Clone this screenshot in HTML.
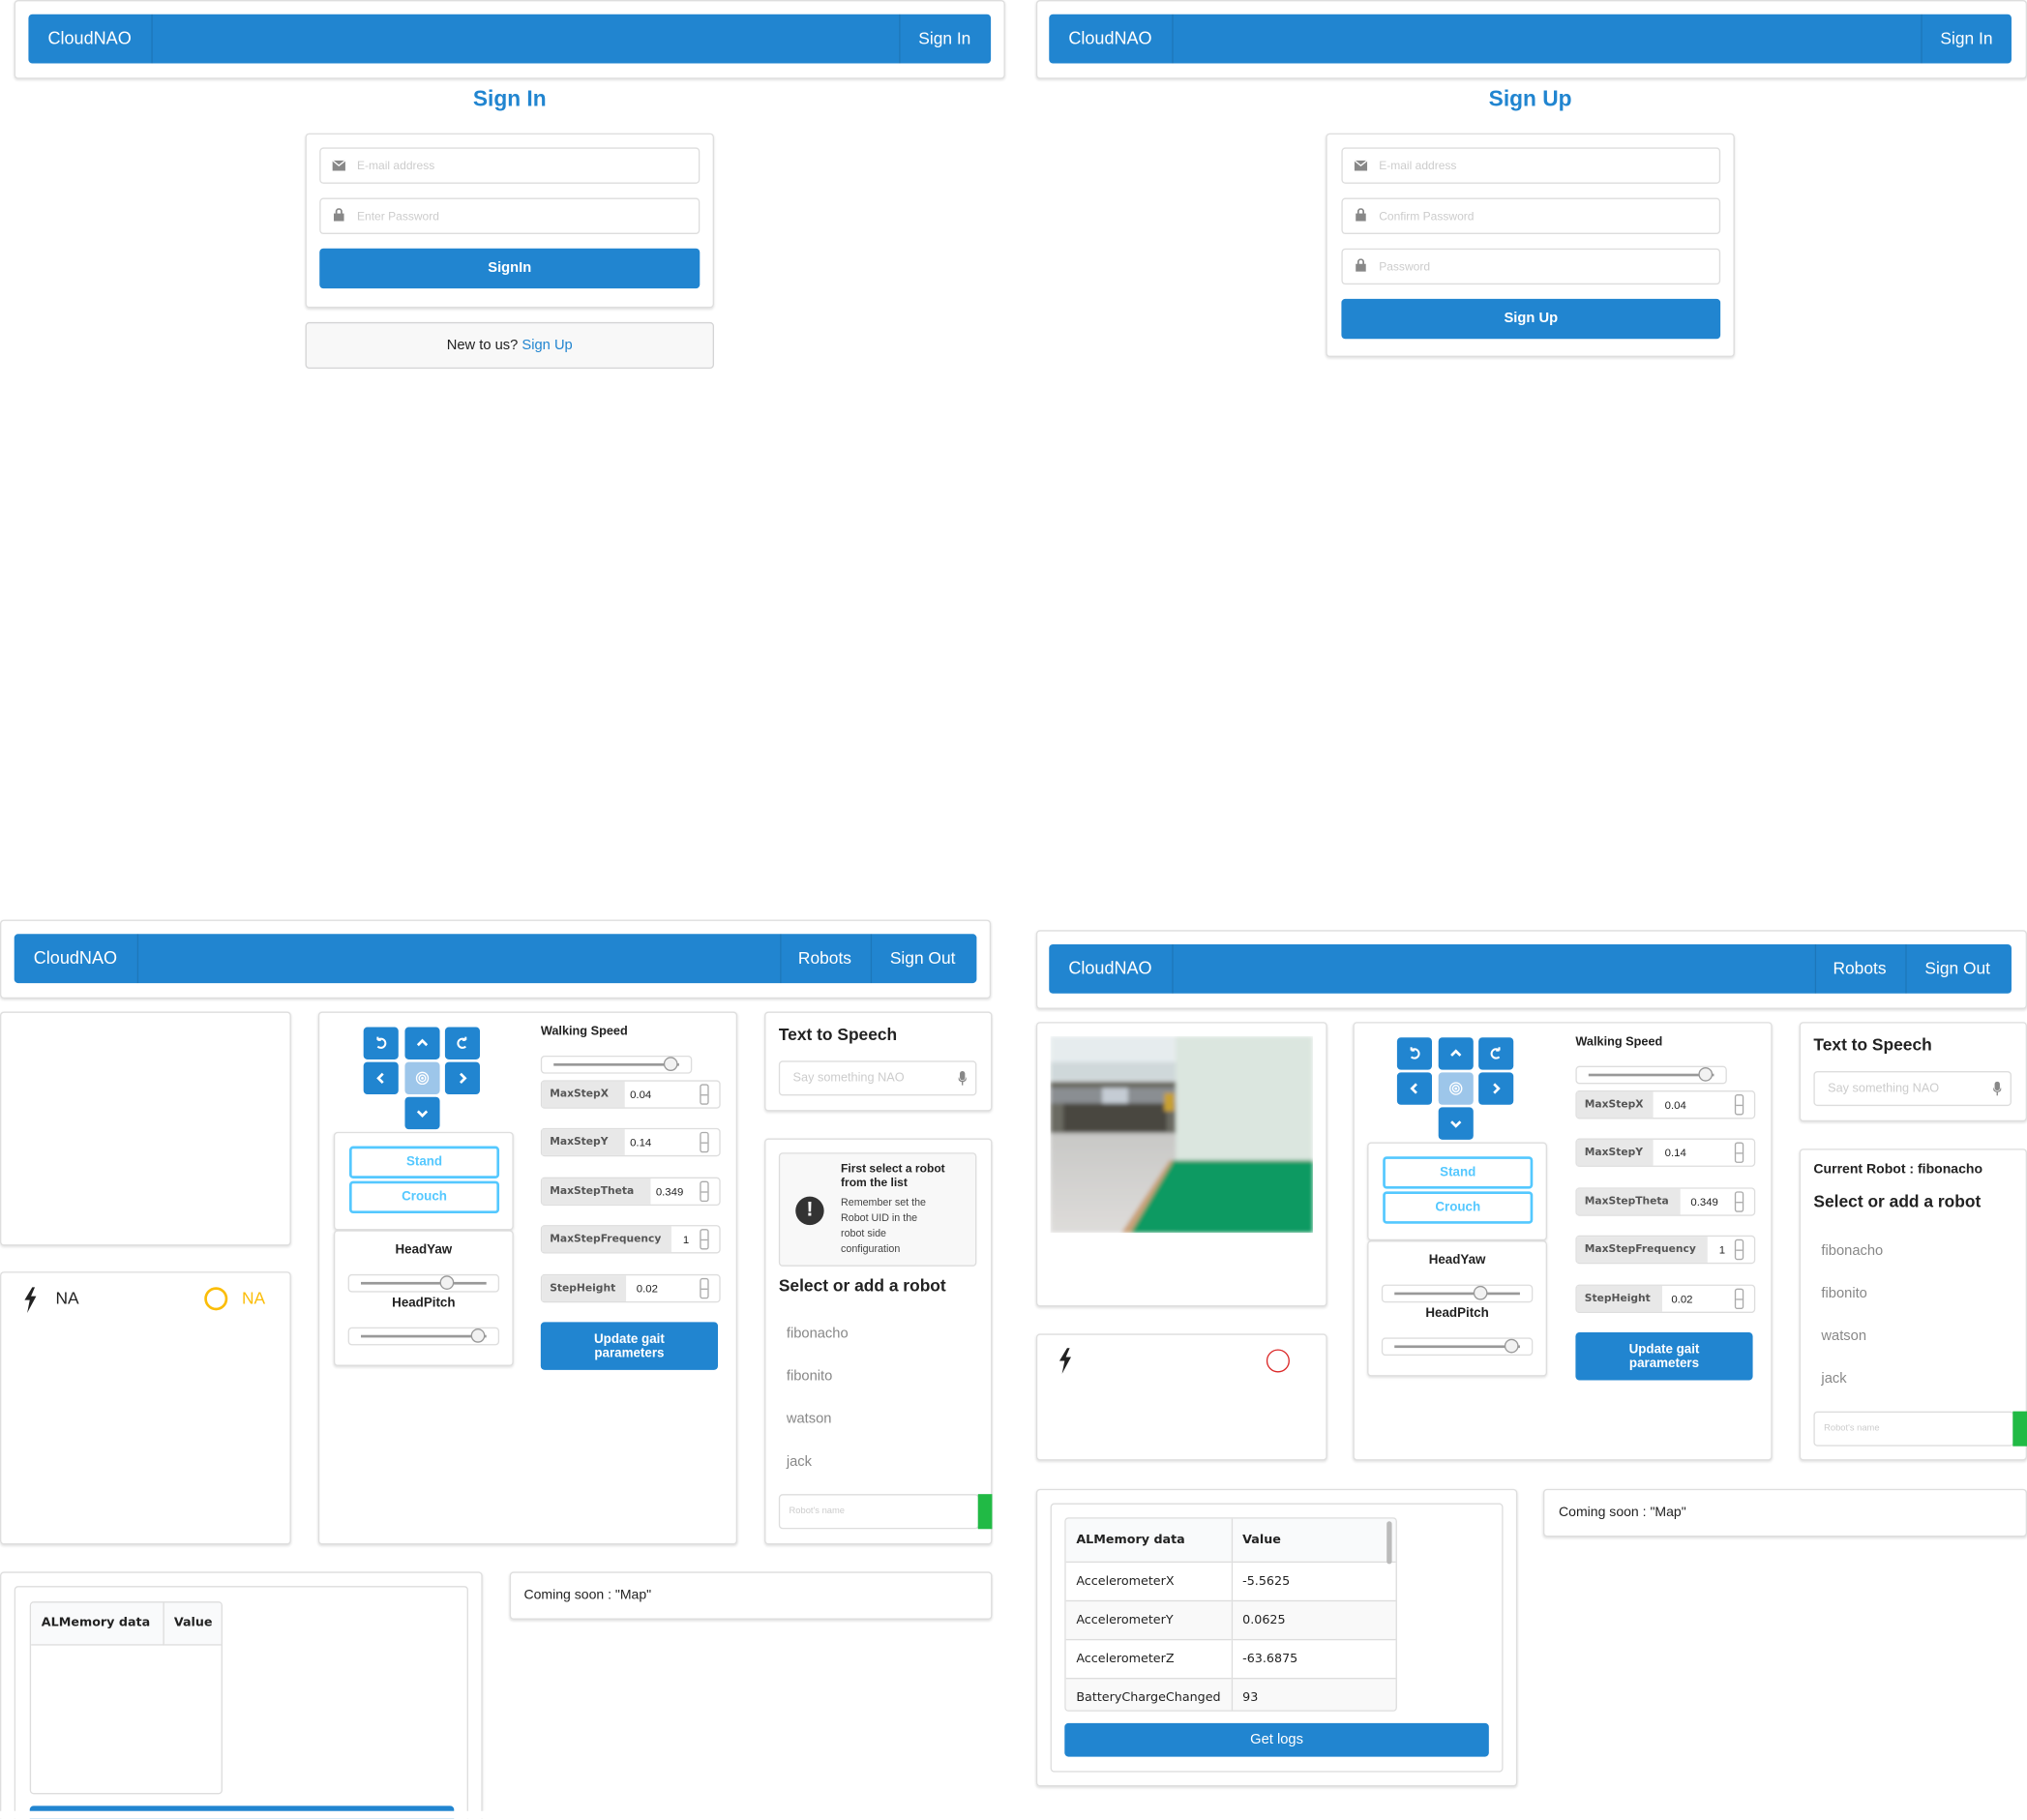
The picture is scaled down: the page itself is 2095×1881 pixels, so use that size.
<!DOCTYPE html>
<html><head><meta charset="utf-8">
<style>
*{box-sizing:border-box;margin:0;padding:0}
html,body{width:2095px;height:1881px;overflow:hidden;background:#fff}
#st{position:absolute;left:0;top:0;width:1567px;height:1406px;overflow:hidden;transform:scale(1.33695);transform-origin:0 0;font-family:"Liberation Sans",sans-serif;color:#222}
.a{position:absolute}
.card{position:absolute;background:#fff;border:1px solid #dedede;border-radius:3px;box-shadow:0 1px 2px rgba(0,0,0,.12)}
.nav{position:absolute;background:#2185d0;border-radius:3px;color:#fff;font-size:13px}
.nav .t{position:absolute;top:0;line-height:38px}
.nav .d{position:absolute;top:0;width:1px;height:100%;background:rgba(0,0,0,.1)}
.inp{position:absolute;border:1px solid #ddd;border-radius:3px;background:#fff;font-size:9px;color:#ccc;padding-left:28px;line-height:26px}
.btn{position:absolute;background:#2185d0;color:#fff;border-radius:3px;text-align:center;font-weight:bold;font-size:11px}
.db{position:absolute;width:27px;height:25px;background:#2185d0;border-radius:3px}
.db svg{position:absolute;left:8px;top:7px}
.ob{position:absolute;left:11px;width:116px;height:25px;border:2px solid #54c8ff;border-radius:3px;color:#54c8ff;font-size:10px;text-align:center;line-height:21px;font-weight:bold}
.sl{position:absolute;border:1px solid #ddd;border-radius:3px;height:14px;background:#fff}
.sl i{position:absolute;left:9px;right:9px;top:5px;height:2px;background:#999}
.sl b{position:absolute;top:0px;width:11px;height:11px;border:1px solid #999;border-radius:50%;background:#f2f2f2}
.ni{position:absolute;left:172px;width:139px;height:22px;border:1px solid #ddd;border-radius:3px;background:#fff}
.ni .l{position:absolute;left:0;top:0;bottom:0;background:#e8e8e8;font-family:"DejaVu Sans",sans-serif;font-weight:bold;font-size:8px;color:#555;line-height:20px;padding-left:6px}
.ni .v{position:absolute;top:0;font-size:8.5px;line-height:20px;color:#222}
.ni .s{position:absolute;right:8px;top:2px;width:7px;height:16px;border:1px solid #aaa;border-radius:2px}
.ni .s:after{content:"";position:absolute;left:0;right:0;top:7px;height:1px;background:#aaa}
.li{position:absolute;left:16px;font-size:11px;color:#888}
.h{font-size:13px;font-weight:bold}
table{border-collapse:collapse;font-family:"DejaVu Sans",sans-serif;font-size:9.5px}
</style></head><body><div id="st">

<div class="card" style="left:11px;top:0;width:766px;height:61px"></div>
<div class="nav" style="left:22px;top:11px;width:744px;height:38px">
 <span class="t" style="left:15px;font-size:13.5px">CloudNAO</span><span class="d" style="left:95px"></span>
 <span class="d" style="left:673px"></span><span class="t" style="left:688px">Sign In</span></div>
<div class="a" style="left:236px;top:67px;width:316px;text-align:center;color:#2185d0;font-weight:bold;font-size:17px">Sign In</div>
<div class="card" style="left:236px;top:103px;width:316px;height:135px"></div>
<div class="inp" style="left:247px;top:114px;width:294px;height:28px">E-mail address</div>
<div class="inp" style="left:247px;top:153px;width:294px;height:28px">Enter Password</div>
<div class="btn" style="left:247px;top:192px;width:294px;height:31px;line-height:31px">SignIn</div>
<div class="a" style="left:236px;top:249px;width:316px;height:36px;background:#f8f8f8;border:1px solid #d4d4d5;border-radius:3px;text-align:center;font-size:11px;line-height:34px">New to us? <span style="color:#2185d0">Sign Up</span></div>

<div class="card" style="left:801px;top:0;width:766px;height:61px"></div>
<div class="nav" style="left:811px;top:11px;width:744px;height:38px">
 <span class="t" style="left:15px;font-size:13.5px">CloudNAO</span><span class="d" style="left:95px"></span>
 <span class="d" style="left:674px"></span><span class="t" style="left:689px">Sign In</span></div>
<div class="a" style="left:1025px;top:67px;width:316px;text-align:center;color:#2185d0;font-weight:bold;font-size:17px">Sign Up</div>
<div class="card" style="left:1025px;top:103px;width:316px;height:173px"></div>
<div class="inp" style="left:1037px;top:114px;width:293px;height:28px">E-mail address</div>
<div class="inp" style="left:1037px;top:153px;width:293px;height:28px">Confirm Password</div>
<div class="inp" style="left:1037px;top:192px;width:293px;height:28px">Password</div>
<div class="btn" style="left:1037px;top:231px;width:293px;height:31px;line-height:31px">Sign Up</div>

<svg class="a" style="left:257px;top:124px" width="10" height="8"><rect width="10" height="8" fill="#888"/><path d="M0 0L5 4L10 0" stroke="#fff" fill="none"/></svg>
<svg class="a" style="left:258px;top:161px" width="8" height="10"><rect y="4" width="8" height="6" fill="#888"/><path d="M2 5V2.5a2 2 0 0 1 4 0V5" stroke="#888" fill="none" stroke-width="1.3"/></svg>
<svg class="a" style="left:1047px;top:124px" width="10" height="8"><rect width="10" height="8" fill="#888"/><path d="M0 0L5 4L10 0" stroke="#fff" fill="none"/></svg>
<svg class="a" style="left:1048px;top:161px" width="8" height="10"><rect y="4" width="8" height="6" fill="#888"/><path d="M2 5V2.5a2 2 0 0 1 4 0V5" stroke="#888" fill="none" stroke-width="1.3"/></svg>
<svg class="a" style="left:1048px;top:200px" width="8" height="10"><rect y="4" width="8" height="6" fill="#888"/><path d="M2 5V2.5a2 2 0 0 1 4 0V5" stroke="#888" fill="none" stroke-width="1.3"/></svg>

<div class="card" style="left:0;top:711px;width:766px;height:61px"></div>
<div class="nav" style="left:11px;top:722px;width:744px;height:38px">
 <span class="t" style="left:15px;font-size:13.5px">CloudNAO</span><span class="d" style="left:95px"></span>
 <span class="d" style="left:592px"></span><span class="t" style="left:606px">Robots</span>
 <span class="d" style="left:662px"></span><span class="t" style="left:677px">Sign Out</span></div>
<div class="card" style="left:0;top:782px;width:225px;height:181px"></div>
<div class="card" style="left:0;top:983px;width:225px;height:211px">
 <svg class="a" style="left:17px;top:11px" width="11" height="20"><path d="M7 0L1 10H5L3 20L10 7H6L9 0Z" fill="#222"/></svg>
 <span class="a" style="left:42px;top:12px;font-size:13px">NA</span>
 <div class="a" style="left:157px;top:11px;width:18px;height:18px;border:2px solid #fbbd08;border-radius:50%"></div>
 <span class="a" style="left:186px;top:12px;font-size:13px;color:#fbbd08">NA</span>
</div>

<div class="card" style="left:246px;top:782px;width:324px;height:412px"></div>
<div class="card" style="left:591px;top:782px;width:176px;height:77px">
 <div class="a h" style="left:10px;top:9px">Text to Speech</div>
 <div class="a" style="left:10px;top:37px;width:153px;height:27px;border:1px solid #ddd;border-radius:3px;font-size:9.5px;color:#ccc;line-height:25px;padding-left:10px">Say something NAO
  <svg class="a" style="right:7px;top:7px" width="6" height="11"><rect x="1" width="4" height="7" rx="2" fill="#888"/><path d="M0 5a3 3 0 0 0 6 0M3 8v3" stroke="#888" fill="none"/></svg></div>
</div>
<div class="card" style="left:591px;top:880px;width:176px;height:314px">
 <div class="a" style="left:10px;top:10px;width:153px;height:88px;background:#f8f8f8;border:1px solid #ddd;border-radius:3px">
  <div class="a" style="left:12px;top:33px;width:22px;height:22px;border-radius:50%;background:#333;color:#fff;text-align:center;font-weight:bold;font-size:16px;line-height:22px">!</div>
  <div class="a" style="left:47px;top:6px;font-size:9px;font-weight:bold;line-height:11px">First select a robot<br>from the list</div>
  <div class="a" style="left:47px;top:32px;font-size:8px;line-height:12px;color:#444">Remember set the<br>Robot UID in the<br>robot side<br>configuration</div>
 </div>
 <div class="a h" style="left:10px;top:105px">Select or add a robot</div>
 <div class="li" style="top:144px">fibonacho</div><div class="li" style="top:177px">fibonito</div>
 <div class="li" style="top:210px">watson</div><div class="li" style="top:243px">jack</div>
 <div class="a" style="left:10px;top:274px;width:155px;height:27px;border:1px solid #ddd;border-radius:3px;font-size:7px;color:#ccc;line-height:25px;padding-left:7px">Robot's name</div>
 <div class="a" style="left:164px;top:274px;width:11px;height:27px;background:#21ba45"></div>
</div>
<div class="card" style="left:0;top:1215px;width:373px;height:200px">
 <div class="a" style="left:10px;top:10px;width:351px;height:200px;border:1px solid #ddd;border-radius:3px"></div>
 <div class="a" style="left:22px;top:22px;width:149px;height:149px;border:1px solid #ddd;border-radius:3px;overflow:hidden">
  <table style="width:100%"><tr style="background:#f9fafb;height:32px"><th style="text-align:left;padding-left:8px;border-right:1px solid #ddd;border-bottom:1px solid #ddd;width:102px">ALMemory data</th><th style="text-align:left;padding-left:8px;border-bottom:1px solid #ddd">Value</th></tr></table>
 </div>
 <div class="a" style="left:22px;top:180px;width:328px;height:20px;background:#2185d0;border-radius:3px"></div>
</div>
<div class="card" style="left:394px;top:1215px;width:373px;height:37px;font-size:10.5px;line-height:35px;padding-left:10px">Coming soon : "Map"</div>

<div class="card" style="left:801px;top:719px;width:766px;height:61px"></div>
<div class="nav" style="left:811px;top:730px;width:744px;height:38px">
 <span class="t" style="left:15px;font-size:13.5px">CloudNAO</span><span class="d" style="left:95px"></span>
 <span class="d" style="left:592px"></span><span class="t" style="left:606px">Robots</span>
 <span class="d" style="left:662px"></span><span class="t" style="left:677px">Sign Out</span></div>
<div class="card" style="left:801px;top:790px;width:225px;height:220px">
 <svg class="a" style="left:10px;top:10px" width="203" height="152" viewBox="0 0 203 152">
  <defs><filter id="bl"><feGaussianBlur stdDeviation="1.5"/></filter>
  <linearGradient id="fl" x1="0" y1="0" x2="0" y2="1"><stop offset="0" stop-color="#c8c8c6"/><stop offset="1" stop-color="#dedcda"/></linearGradient></defs>
  <g filter="url(#bl)">
  <rect width="203" height="152" fill="#d8dcda"/>
  <rect width="97" height="35" fill="#e6ecee"/>
  <rect x="0" y="20" width="97" height="14" fill="#cfd8da"/>
  <rect y="35" width="97" height="40" fill="#6b6a62"/>
  <rect x="0" y="40" width="97" height="12" fill="#8a8e92"/>
  <rect x="40" y="40" width="20" height="12" fill="#c5ccd4"/>
  <rect x="10" y="52" width="80" height="22" fill="#4a4741"/>
  <rect x="88" y="44" width="8" height="14" fill="#c8a030"/>
  <rect y="75" width="97" height="77" fill="url(#fl)"/>
  <rect x="97" width="106" height="96" fill="#dbe6df"/>
  <path d="M95 96L203 96L203 152L62 152Z" fill="#119a62"/>
  <path d="M95 96L62 152L55 152L92 96Z" fill="#c9a178"/>
  </g>
 </svg>
</div>
<div class="card" style="left:801px;top:1031px;width:225px;height:98px">
 <svg class="a" style="left:16px;top:10px" width="11" height="20"><path d="M7 0L1 10H5L3 20L10 7H6L9 0Z" fill="#222"/></svg>
 <div class="a" style="left:177px;top:11px;width:18px;height:18px;border:1.5px solid #db2828;border-radius:50%"></div>
</div>
<div class="card" style="left:1046px;top:790px;width:324px;height:339px"></div>
<div class="card" style="left:1391px;top:790px;width:176px;height:77px">
 <div class="a h" style="left:10px;top:9px">Text to Speech</div>
 <div class="a" style="left:10px;top:37px;width:153px;height:27px;border:1px solid #ddd;border-radius:3px;font-size:9.5px;color:#ccc;line-height:25px;padding-left:10px">Say something NAO
  <svg class="a" style="right:7px;top:7px" width="6" height="11"><rect x="1" width="4" height="7" rx="2" fill="#888"/><path d="M0 5a3 3 0 0 0 6 0M3 8v3" stroke="#888" fill="none"/></svg></div>
</div>
<div class="card" style="left:1391px;top:888px;width:176px;height:241px">
 <div class="a" style="left:10px;top:9px;font-size:10.5px;font-weight:bold">Current Robot : fibonacho</div>
 <div class="a h" style="left:10px;top:32px">Select or add a robot</div>
 <div class="li" style="top:72px">fibonacho</div><div class="li" style="top:105px">fibonito</div>
 <div class="li" style="top:138px">watson</div><div class="li" style="top:171px">jack</div>
 <div class="a" style="left:10px;top:202px;width:155px;height:27px;border:1px solid #ddd;border-radius:3px;font-size:7px;color:#ccc;line-height:25px;padding-left:7px">Robot's name</div>
 <div class="a" style="left:164px;top:202px;width:11px;height:27px;background:#21ba45"></div>
</div>
<div class="card" style="left:801px;top:1151px;width:372px;height:230px">
 <div class="a" style="left:10px;top:10px;width:350px;height:208px;border:1px solid #ddd;border-radius:3px"></div>
 <div class="a" style="left:21px;top:21px;width:257px;height:150px;border:1px solid #ddd;border-radius:3px;overflow:hidden">
  <table style="width:100%">
   <tr style="background:#f9fafb;height:33px"><th style="text-align:left;padding-left:8px;border-right:1px solid #ddd;width:128px">ALMemory data</th><th style="text-align:left;padding-left:8px">Value</th></tr>
   <tr style="height:30px;border-top:1px solid #ddd"><td style="padding-left:8px;border-right:1px solid #ddd">AccelerometerX</td><td style="padding-left:8px">-5.5625</td></tr>
   <tr style="height:30px;border-top:1px solid #ddd;background:#f9f9f9"><td style="padding-left:8px;border-right:1px solid #ddd">AccelerometerY</td><td style="padding-left:8px">0.0625</td></tr>
   <tr style="height:30px;border-top:1px solid #ddd"><td style="padding-left:8px;border-right:1px solid #ddd">AccelerometerZ</td><td style="padding-left:8px">-63.6875</td></tr>
   <tr style="height:30px;border-top:1px solid #ddd;background:#f9f9f9"><td style="padding-left:8px;border-right:1px solid #ddd">BatteryChargeChanged</td><td style="padding-left:8px">93</td></tr>
  </table>
  <div class="a" style="right:3px;top:2px;width:4px;height:33px;background:#bbb;border-radius:2px"></div>
 </div>
 <div class="btn" style="left:21px;top:180px;width:328px;height:26px;line-height:26px;font-weight:normal">Get logs</div>
</div>
<div class="card" style="left:1193px;top:1151px;width:374px;height:37px;font-size:10.5px;line-height:35px;padding-left:11px">Coming soon : "Map"</div>

<div class="a" style="left:246px;top:782px;width:324px;height:300px">
 <div class="db" style="left:35px;top:12px"><svg width="11" height="11"><path d="M3 3A3.5 3.5 0 1 1 3 8M3 3V0.5M3 3H5.5" stroke="#fff" stroke-width="1.5" fill="none"/></svg></div>
 <div class="db" style="left:67px;top:12px"><svg width="11" height="11"><path d="M2 7L5.5 3.5L9 7" stroke="#fff" stroke-width="2" fill="none"/></svg></div>
 <div class="db" style="left:98px;top:12px"><svg width="11" height="11"><path d="M8 3A3.5 3.5 0 1 0 8 8M8 3V0.5M8 3H5.5" stroke="#fff" stroke-width="1.5" fill="none"/></svg></div>
 <div class="db" style="left:35px;top:39px"><svg width="11" height="11"><path d="M7 2L3.5 5.5L7 9" stroke="#fff" stroke-width="2" fill="none"/></svg></div>
 <div class="db" style="left:67px;top:39px;background:#9dc6ea"><svg width="11" height="11"><circle cx="5.5" cy="5.5" r="4.5" stroke="#fff" fill="none"/><circle cx="5.5" cy="5.5" r="2.5" stroke="#fff" fill="none"/><circle cx="5.5" cy="5.5" r="1" fill="#fff"/></svg></div>
 <div class="db" style="left:98px;top:39px"><svg width="11" height="11"><path d="M4 2L7.5 5.5L4 9" stroke="#fff" stroke-width="2" fill="none"/></svg></div>
 <div class="db" style="left:67px;top:66px"><svg width="11" height="11"><path d="M2 4L5.5 7.5L9 4" stroke="#fff" stroke-width="2" fill="none"/></svg></div>
 <div class="card" style="left:12px;top:93px;width:139px;height:76px"><div class="ob" style="top:10px">Stand</div><div class="ob" style="top:37px">Crouch</div></div>
 <div class="card" style="left:12px;top:169px;width:139px;height:105px">
  <div class="a" style="left:0;width:137px;top:9px;text-align:center;font-size:10px;font-weight:bold">HeadYaw</div>
  <div class="sl" style="left:10px;top:33px;width:117px"><i></i><b style="left:70px"></b></div>
  <div class="a" style="left:0;width:137px;top:50px;text-align:center;font-size:10px;font-weight:bold">HeadPitch</div>
  <div class="sl" style="left:10px;top:74px;width:117px"><i></i><b style="left:94px"></b></div>
 </div>
 <div class="a" style="left:172px;top:10px;font-size:9.5px;font-weight:bold">Walking Speed</div>
 <div class="sl" style="left:172px;top:34px;width:117px"><i></i><b style="left:94px"></b></div>
 <div class="ni" style="top:53px"><span class="l" style="width:64px">MaxStepX</span><span class="v" style="left:68px">0.04</span><span class="s"></span></div>
 <div class="ni" style="top:90px"><span class="l" style="width:64px">MaxStepY</span><span class="v" style="left:68px">0.14</span><span class="s"></span></div>
 <div class="ni" style="top:128px"><span class="l" style="width:84px">MaxStepTheta</span><span class="v" style="left:88px">0.349</span><span class="s"></span></div>
 <div class="ni" style="top:165px"><span class="l" style="width:100px">MaxStepFrequency</span><span class="v" style="left:109px">1</span><span class="s"></span></div>
 <div class="ni" style="top:203px"><span class="l" style="width:65px">StepHeight</span><span class="v" style="left:73px">0.02</span><span class="s"></span></div>
 <div class="btn" style="left:172px;top:240px;width:137px;height:37px;font-size:10px;line-height:11px;padding-top:8px">Update gait<br>parameters</div>
</div>

<div class="a" style="left:1046px;top:790px;width:324px;height:300px">
 <div class="db" style="left:34px;top:12px"><svg width="11" height="11"><path d="M3 3A3.5 3.5 0 1 1 3 8M3 3V0.5M3 3H5.5" stroke="#fff" stroke-width="1.5" fill="none"/></svg></div>
 <div class="db" style="left:66px;top:12px"><svg width="11" height="11"><path d="M2 7L5.5 3.5L9 7" stroke="#fff" stroke-width="2" fill="none"/></svg></div>
 <div class="db" style="left:97px;top:12px"><svg width="11" height="11"><path d="M8 3A3.5 3.5 0 1 0 8 8M8 3V0.5M8 3H5.5" stroke="#fff" stroke-width="1.5" fill="none"/></svg></div>
 <div class="db" style="left:34px;top:39px"><svg width="11" height="11"><path d="M7 2L3.5 5.5L7 9" stroke="#fff" stroke-width="2" fill="none"/></svg></div>
 <div class="db" style="left:66px;top:39px;background:#9dc6ea"><svg width="11" height="11"><circle cx="5.5" cy="5.5" r="4.5" stroke="#fff" fill="none"/><circle cx="5.5" cy="5.5" r="2.5" stroke="#fff" fill="none"/><circle cx="5.5" cy="5.5" r="1" fill="#fff"/></svg></div>
 <div class="db" style="left:97px;top:39px"><svg width="11" height="11"><path d="M4 2L7.5 5.5L4 9" stroke="#fff" stroke-width="2" fill="none"/></svg></div>
 <div class="db" style="left:66px;top:66px"><svg width="11" height="11"><path d="M2 4L5.5 7.5L9 4" stroke="#fff" stroke-width="2" fill="none"/></svg></div>
 <div class="card" style="left:11px;top:93px;width:139px;height:76px"><div class="ob" style="top:10px">Stand</div><div class="ob" style="top:37px">Crouch</div></div>
 <div class="card" style="left:11px;top:169px;width:139px;height:105px">
  <div class="a" style="left:0;width:137px;top:9px;text-align:center;font-size:10px;font-weight:bold">HeadYaw</div>
  <div class="sl" style="left:10px;top:33px;width:117px"><i></i><b style="left:70px"></b></div>
  <div class="a" style="left:0;width:137px;top:50px;text-align:center;font-size:10px;font-weight:bold">HeadPitch</div>
  <div class="sl" style="left:10px;top:74px;width:117px"><i></i><b style="left:94px"></b></div>
 </div>
 <div class="a" style="left:172px;top:10px;font-size:9.5px;font-weight:bold">Walking Speed</div>
 <div class="sl" style="left:172px;top:34px;width:117px"><i></i><b style="left:94px"></b></div>
 <div class="ni" style="top:53px"><span class="l" style="width:59px">MaxStepX</span><span class="v" style="left:68px">0.04</span><span class="s"></span></div>
 <div class="ni" style="top:90px"><span class="l" style="width:59px">MaxStepY</span><span class="v" style="left:68px">0.14</span><span class="s"></span></div>
 <div class="ni" style="top:128px"><span class="l" style="width:80px">MaxStepTheta</span><span class="v" style="left:88px">0.349</span><span class="s"></span></div>
 <div class="ni" style="top:165px"><span class="l" style="width:101px">MaxStepFrequency</span><span class="v" style="left:110px">1</span><span class="s"></span></div>
 <div class="ni" style="top:203px"><span class="l" style="width:66px">StepHeight</span><span class="v" style="left:73px">0.02</span><span class="s"></span></div>
 <div class="btn" style="left:172px;top:240px;width:137px;height:37px;font-size:10px;line-height:11px;padding-top:8px">Update gait<br>parameters</div>
</div>

<div class="a" style="left:0;top:1400px;width:1567px;height:6px;background:#fff"></div>
</div></body></html>
